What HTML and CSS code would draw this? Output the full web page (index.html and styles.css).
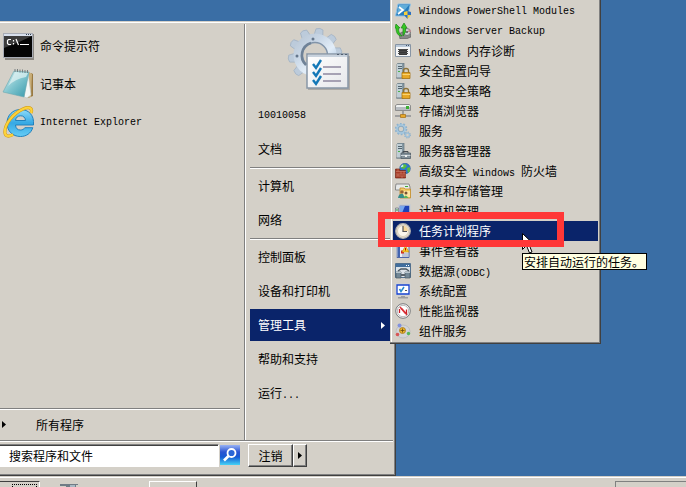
FILE: index.html
```html
<!DOCTYPE html>
<html lang="zh-CN">
<head>
  <meta charset="UTF-8">
  <meta name="viewport" content="width=device-width, initial-scale=1">
  <title>管理工具</title>
  <link rel="stylesheet" href="styles.css">
</head>
<body>
  <main class="desktop">
    <div class="start-menu">
      <div class="start-main">
        <div class="left-col">
          <ul class="pinned">
            <li>
              <svg class="app-icon" viewBox="0 0 32 32">
                <path d="M3 4h29v26H3z" fill="#8c8983"/>
                <path d="M1 3h30v25H1z" fill="#a8acb5"/>
                <path d="M2 4h28v2H2z" fill="#d7dfec"/>
                <path d="M24 4h1v1h-1zM26 4h1v1h-1zM28 4h1v1h-1z" fill="#345"/>
                <path d="M2 6h28v21H2z" fill="#050505"/>
                <path d="M2 6h28Q16 13 2 18z" fill="#3b3b3b"/>
                <path d="M9 9.500H6.500l-1 1v3l1 1H9M11.500 10v1.500M11.500 13v1.500M14 9l2.500 6M18 14.500h9" fill="none" stroke="#fff" stroke-width="1.200"/>
              </svg>
              <span>命令提示符</span>
            </li>
            <li>
              <svg class="app-icon" viewBox="0 0 32 32">
                <defs>
                  <linearGradient id="note" x1="0" y1="0" x2="1" y2="1">
                    <stop offset="0" stop-color="#dff3f3"/><stop offset=".5" stop-color="#7fc4ce"/><stop offset="1" stop-color="#3598ab"/>
                  </linearGradient>
                </defs>
                <path d="M29 5l2 1v22l-5 2z" fill="#9a7a42"/>
                <path d="M27 4l3 2-1 23-5 1z" fill="#c9ae78"/>
                <path d="M26 4l-4 25 3 1 4-3z" fill="#f4f6f4" stroke="#b9c3c3" stroke-width=".6"/>
                <path d="M12 3l15 1-5 25L1 24z" fill="url(#note)" stroke="#6ba7b0" stroke-width=".6"/>
                <path d="M13 4l13 1-2 4Q13 11 6 18z" fill="#e4f4f4" opacity=".7"/>
                <path d="M13 1v3M15.500 1v3M18 1.500v3M20.500 1.500v3M23 2v3M25.500 2v3" stroke="#777f80"/>
              </svg>
              <span>记事本</span>
            </li>
            <li>
              <svg class="app-icon" viewBox="0 0 32 32">
                <defs>
                  <linearGradient id="ie" x1="0" y1="0" x2="0" y2="1">
                    <stop offset="0" stop-color="#8fdcfa"/><stop offset=".5" stop-color="#36a9e4"/><stop offset="1" stop-color="#64ccf6"/>
                  </linearGradient>
                </defs>
                <path d="M31.500 19H13.500c.3 3.500 2 5 5 5 2 0 3.500-.8 4.300-2.300h8C29 27.500 24 30.500 18.500 30.500 10.500 30.500 5 25 5 17S11 3.500 18.500 3.500C26.500 3.500 32.500 9 31.500 19zM13.500 14.500h10c-.3-3-2-4.700-4.800-4.700-3 0-4.800 1.700-5.200 4.700z" fill="url(#ie)" stroke="#1779b8" stroke-width=".9"/>
                <path d="M29 7C31 2 27 0 21 3 12 7 2 18 3 27c.6 3.500 4 4 8 1.500" fill="none" stroke="#d39a14" stroke-width="3.200"/>
                <path d="M29 7C31 2 27 0 21 3 12 7 2 18 3 27c.6 3.500 4 4 8 1.500" fill="none" stroke="#fcd23a" stroke-width="2.200"/>
              </svg>
              <span class="en">Internet Explorer</span>
            </li>
          </ul>
          <div class="all-programs">
            <svg class="arrow" viewBox="0 0 4 7"><path d="M0 0l4 3.500L0 7z"/></svg>
            <span>所有程序</span>
          </div>
        </div>

        <div class="right-col">
          <svg class="user-pic" viewBox="0 0 62 62">
            <defs>
              <linearGradient id="gear" gradientUnits="userSpaceOnUse" x1="5" y1="5" x2="45" y2="50">
                <stop offset="0" stop-color="#b5c2d0"/><stop offset=".35" stop-color="#c9d7e6"/><stop offset=".6" stop-color="#e2edf8"/><stop offset="1" stop-color="#8fb0d2"/>
              </linearGradient>
              <linearGradient id="sheet" x1="0" y1="0" x2="1" y2="1">
                <stop offset="0" stop-color="#fff"/><stop offset="1" stop-color="#e6e7ea"/>
              </linearGradient>
              <path id="teeth" d="M21.500 8l1-7q4-2 7 0l1 7v38l-1 7q-3 2-7 0l-1-7z"/>
              <mask id="hole"><path d="M-5-5h70v70H-5z" fill="#fff"/><circle cx="26" cy="27" r="12"/></mask>
            </defs>
            <g mask="url(#hole)">
              <g fill="#bccbdb" stroke="#a3b3c4" stroke-width=".8">
                <use href="#teeth" transform="rotate(10 26 27)"/>
                <use href="#teeth" transform="rotate(46 26 27)"/>
                <use href="#teeth" transform="rotate(82 26 27)"/>
                <use href="#teeth" transform="rotate(118 26 27)"/>
                <use href="#teeth" transform="rotate(154 26 27)"/>
              </g>
              <circle cx="26" cy="27" r="21.500" fill="url(#gear)"/>
            </g>
            <circle cx="26" cy="27" r="12.500" fill="none" stroke="#8294a8" stroke-width="1.500"/>
            <path d="M17 37a13 13 0 0 1 5-22" fill="none" stroke="#6f8297" stroke-width="2.500"/>
            <circle cx="24" cy="11" r="1.500" fill="#65778c"/>
            <circle cx="8" cy="28" r="1.500" fill="#65778c"/>
            <path d="M19 28h42v34H19z" fill="#9b9894" opacity=".7"/>
            <path d="M18 26h41v34H18z" fill="url(#sheet)" stroke="#8896a6" stroke-width="1.500"/>
            <path d="M19 27h39v2H19z" fill="#c8d2dd"/>
            <path d="M48 26h2v1h-2zM52 26h2v1h-2zM56 26h2v1h-2z" fill="#526071"/>
            <path d="M34 39h18M34 46h18M34 53h18" stroke="#8f88a0" stroke-width="1.600"/>
            <path d="M24 36l3 4 5-8M24 44l3 4 5-8M24 52l3 4 5-8" fill="none" stroke="#1478b7" stroke-width="2.400"/>
          </svg>
          <ul class="places">
            <li><span class="en">10010058</span></li>
            <li>文档</li>
            <li class="sep"></li>
            <li>计算机</li>
            <li>网络</li>
            <li class="sep"></li>
            <li>控制面板</li>
            <li>设备和打印机</li>
            <li class="has-sub">
              <div class="open">
                <span>管理工具</span>
                <svg class="arrow" viewBox="0 0 4 7"><path d="M0 0l4 3.500L0 7z"/></svg>
              </div>

              <ul class="submenu">
                <li>
                  <svg viewBox="0 0 16 16"><path d="M3 1h12.500l-3 12H.5z" fill="#287dbe" stroke="#8fc2e5"/><path d="M4 2h10L9 8 2 10z" fill="#61add9"/><path d="M4 4l4 3-5 4" fill="none" stroke="#fff" stroke-width="1.700"/><path d="M9 9l3.500-1L16 9v3l-3.500 4L9 12z" fill="#f7cf3b"/><path d="M12.500 8v4H16V9zM9 12h3.500v4z" fill="#2b70c5"/></svg>
                  <span class="en">Windows PowerShell Modules</span>
                </li>
                <li>
                  <svg viewBox="0 0 16 16"><path d="M4 11l3-2h8l1 5-5 2H5z" fill="#888" stroke="#555" stroke-width=".6"/><circle cx="12" cy="9" r="3.500" fill="#ccd1d4" stroke="#777"/><path d="M12 9l3-3 1 3z" fill="#c78b91"/><circle cx="12" cy="9" r="1" fill="#555"/><path d="M1 1l4 4H3.500c0 4 1 6 3.500 8-4 0-6-3-6-8H0zM8 13V5H6l3-5 3 5h-1.500v4z" fill="#35c723" stroke="#1c8718" stroke-width=".7"/></svg>
                  <span class="en">Windows Server Backup</span>
                </li>
                <li>
                  <svg viewBox="0 0 16 16"><path d="M.5 1.500h15v12H.5z" fill="#f5f6f7" stroke="#8795a5"/><path d="M1 2h14v2H1z" fill="#b9c9da"/><path d="M11 2h1v1h-1zM13 2h1v1h-1z" fill="#456"/><path d="M4 6h8v6H4z" fill="#383838"/><path d="M3 6.500h10M3 8.500h10M3 10.500h10" stroke="#484848"/></svg>
                  <span><span class="en">Windows </span>内存诊断</span>
                </li>
                <li>
                  <svg viewBox="0 0 16 16"><use href="#server"/><use href="#lock"/></svg>
                  <span>安全配置向导</span>
                </li>
                <li>
                  <svg viewBox="0 0 16 16"><use href="#server"/><use href="#lock"/></svg>
                  <span>本地安全策略</span>
                </li>
                <li>
                  <svg viewBox="0 0 16 16"><path d="M2 1.500h12l1.500 1v5H.5v-5z" fill="#eef0f0" stroke="#777" stroke-width=".8"/><path d="M1 4h14v3H1z" fill="#b7bcc1"/><path d="M11 3h3v3h-3z" fill="#3cb034"/><path d="M8 8v4M0 13h16" stroke="#8d8f91" stroke-width="1.500"/><path d="M5.500 11.500h5v3h-5z" fill="#e6a82b" stroke="#a66f13" stroke-width=".7"/></svg>
                  <span>存储浏览器</span>
                </li>
                <li>
                  <svg viewBox="0 0 16 16"><circle cx="6" cy="6" r="4" fill="none" stroke="#a7c8df" stroke-width="2.500"/><circle cx="6" cy="6" r="5.500" fill="none" stroke="#8eb3cf" stroke-width="1.600" stroke-dasharray="1.800 1.650"/><circle cx="6" cy="6" r="2.800" fill="none" stroke="#7199b6" stroke-width=".7"/><circle cx="12.500" cy="12" r="2" fill="none" stroke="#9fc0d8" stroke-width="1.600"/><circle cx="12.500" cy="12" r="3" fill="none" stroke="#89adc8" stroke-dasharray="1.200 1.150"/></svg>
                  <span>服务</span>
                </li>
                <li>
                  <svg viewBox="0 0 16 16"><use href="#server"/><path d="M8 10V8.500h5V10" fill="none" stroke="#444b50"/><path d="M6 10h9.500v5.500H6z" fill="#83919a" stroke="#4f5c66" stroke-width=".8"/><path d="M6 12.500h9.500" stroke="#cbd4d9"/><path d="M10 12h2v2h-2z" fill="#eef0f0"/></svg>
                  <span>服务器管理器</span>
                </li>
                <li>
                  <svg viewBox="0 0 16 16"><circle cx="10" cy="5.500" r="5.300" fill="#2b79cc" stroke="#205594" stroke-width=".6"/><path d="M7 2l3-1 2 2-3 3-3-1zM12 5l3-1v4l-2 2z" fill="#58bd3f"/><path d="M8 1.500q-2 1-2.500 3l3-1z" fill="#c7ecff"/><path d="M.5 6h4v1.500h6V15H.5z" fill="#a73c27" stroke="#722718" stroke-width=".7"/><path d="M1 8.500h10M1 11h10M1 13h10M3 6v2.500M6 8.500V11M9 8v3M3 11v2M7 13v2" stroke="#cf8370" stroke-width=".6"/></svg>
                  <span>高级安全<span class="en"> Windows </span>防火墙</span>
                </li>
                <li>
                  <svg viewBox="0 0 16 16"><path d="M1 1h13l1 3v3H.5V4z" fill="#e6e8e8" stroke="#777" stroke-width=".8"/><path d="M10 3h3v1h-3z" fill="#3aad32"/><path d="M5 5h4l1 1h5.500v9H5z" fill="#f3cc68" stroke="#c18c28" stroke-width=".8"/><path d="M6 8h9v6H6z" fill="#ffe6a0"/><circle cx="7" cy="9" r="1.800" fill="#9b6435"/><circle cx="11" cy="10" r="1.500" fill="#765334"/><path d="M3 15q1-5 5-4l2 4z" fill="#378d8b"/><path d="M8.500 15q2-5 5 0z" fill="#5ab55a"/></svg>
                  <span>共享和存储管理</span>
                </li>
                <li>
                  <svg viewBox="0 0 16 16"><path d="M4 2h11v9H4z" fill="#1d42b8" stroke="#c6cbd2" stroke-width="1.500"/><path d="M5 3h5L7 10H5z" fill="#78a6ed"/><path d="M.5 5h3v10h-3z" fill="#d3d7da" stroke="#6c7680" stroke-width=".7"/><path d="M1 7h2" stroke="#38a33a"/><path d="M7 12h6l1 3H6z" fill="#86919e"/></svg>
                  <span>计算机管理</span>
                </li>
                <li class="selected">
                  <svg viewBox="0 0 16 16"><circle cx="8" cy="8" r="7.300" fill="#e9e2d3" stroke="#b1b0ad" stroke-width="1.300"/><circle cx="8" cy="8" r="5.500" fill="#fbf7ec" stroke="#d0c5ac" stroke-width=".8"/><path d="M8 8V3a5 5 0 0 1 5 5z" fill="#f6d697"/><path d="M8 3v5.500h4" fill="none" stroke="#555" stroke-width="1.200"/></svg>
                  <span>任务计划程序</span>
                  <svg class="cursor" viewBox="0 0 12 21"><path d="M.5.5v16l4-4 3 7.500 2.500-1-3-7.500h5z" fill="#fff" stroke="#000"/></svg>
                  <div class="red-box"></div>
                  <div class="tooltip" role="tooltip">安排自动运行的任务。</div>
                </li>
                <li>
                  <svg viewBox="0 0 16 16"><path d="M2 .5h12v14H2z" fill="#edf1f8" stroke="#4f67a6"/><path d="M2 1h3v13H2z" fill="#4364af"/><path d="M1 3h2M1 5h2M1 7h2M1 9h2M1 11h2M1 13h2" stroke="#ddd" stroke-width=".8"/><path d="M7 11h6M7 13h6" stroke="#8d99b5"/><path d="M6 7.500h3v3H6z" fill="#d42020"/><path d="M10.500 3l3.500 6H7z" fill="#f8ce29" stroke="#c28a14" stroke-width=".7"/><path d="M10.500 5v2.500" stroke="#c00"/></svg>
                  <span>事件查看器</span>
                </li>
                <li>
                  <svg viewBox="0 0 16 16"><path d="M.5.500h15v14H.5z" fill="#dce3e9" stroke="#52708e"/><path d="M1 1h14v3H1z" fill="#416e9d"/><path d="M11 2h1v1h-1zM13 2h1v1h-1z" fill="#fff"/><path d="M3 8l3-2h5l3 2" fill="none" stroke="#4b5861" stroke-width="1.500"/><path d="M1 9h5v6H1zM10 9h5v6h-5z" fill="#738896" stroke="#455965" stroke-width=".7"/><path d="M6 11h4v2H6z" fill="#59636b"/><path d="M1 9h5v1H1zM10 9h5v1h-5z" fill="#b9c6ce"/></svg>
                  <span>数据源<span class="en">(ODBC)</span></span>
                </li>
                <li>
                  <svg viewBox="0 0 16 16"><path d="M1 1h14v11H1z" fill="#fff" stroke="#cfd1d2" stroke-width="1.500"/><path d="M2 2h12v9H2z" fill="#fff" stroke="#1743cf" stroke-width="1.300"/><path d="M4.500 6l1.500 2.500L9 4" fill="none" stroke="#2687cc" stroke-width="1.500"/><path d="M10 7.500h2" stroke="#555"/><path d="M6 13h4v1h3v1.500H3V14h3z" fill="#9b9d9f"/></svg>
                  <span>系统配置</span>
                </li>
                <li>
                  <svg viewBox="0 0 16 16"><circle cx="8" cy="8" r="7.300" fill="#f8f8f8" stroke="#77797b"/><circle cx="8" cy="8" r="5.700" fill="#fff" stroke="#aaa" stroke-width=".8"/><path d="M4.500 10V6M6.500 5.500l5 5.500V6.500" fill="none" stroke="#ca1e25" stroke-width="1.300"/><path d="M5 4l6 7" stroke="#dc3339" stroke-width="1.600"/></svg>
                  <span>性能监视器</span>
                </li>
                <li>
                  <svg viewBox="0 0 16 16"><ellipse cx="8" cy="8.500" rx="7" ry="6.500" fill="#d2d4d8" stroke="#b4b6ba" stroke-width=".7"/><circle cx="7.500" cy="7.500" r="3" fill="#edb72e" stroke="#a7771b" stroke-width=".8"/><path d="M7.500 5.500v4M5.500 7.500h4" stroke="#684910" stroke-width=".8"/><circle cx="4.500" cy="2.500" r="2" fill="#8292dd"/><circle cx="2.500" cy="11.500" r="1.800" fill="#d75656"/><circle cx="13.500" cy="10.500" r="1.700" fill="#55b95a"/></svg>
                  <span>组件服务</span>
                </li>
              </ul>
            </li>
            <li>帮助和支持</li>
            <li><span>运行<span class="en">...</span></span></li>
          </ul>
        </div>
      </div>

      <form class="start-footer">
        <input class="search" type="text" value="搜索程序和文件" aria-label="搜索程序和文件">
        <button class="search-btn" type="button" aria-label="搜索">
          <svg viewBox="0 0 20 20"><defs><linearGradient id="sb" x1="0" y1="0" x2="0" y2="1"><stop offset="0" stop-color="#99b2f4"/><stop offset=".35" stop-color="#2b55d2"/><stop offset=".6" stop-color="#155bd3"/><stop offset="1" stop-color="#45d3f6"/></linearGradient></defs><path d="M0 0h20v20H0z" fill="url(#sb)"/><circle cx="11.500" cy="8" r="4" fill="#2a66d6" stroke="#fff" stroke-width="1.800"/><path d="M8.500 11L4 15.500" stroke="#fff" stroke-width="2.600"/></svg>
        </button>
        <div class="logoff">
          <button class="btn" type="button">注销</button>
          <button class="btn more" type="button" aria-label="更多">
            <svg class="arrow" viewBox="0 0 4 7"><path d="M0 0l4 3.500L0 7z"/></svg>
          </button>
        </div>
      </form>
    </div>
  </main>

  <footer class="taskbar">
    <button class="start-btn" type="button" aria-label="开始"><span class="focus"></span></button>
    <svg class="task-icon" viewBox="0 0 20 4"><path d="M0 1h18v1h-2v2H6V3H0z" fill="#707c86"/><path d="M10 2h5v2h-5z" fill="#a8b9c4"/></svg>
    <button class="task-btn" type="button" aria-label="任务"></button>
    <div class="tray"></div>
  </footer>

  <!-- shared icon parts -->
  <svg class="defs" aria-hidden="true">
    <g id="server">
      <path d="M2 1l2-1h5v14l-1 1H2z" fill="#8598a3" stroke="#65757e" stroke-width=".7"/>
      <path d="M2 1h5v14H2z" fill="#c0ced5"/>
      <path d="M3 3.500h4M3 5.500h4" stroke="#53656f"/>
      <path d="M3 8h2v1H3z" fill="#4bb14b"/>
      <path d="M1 15h8" stroke="#738089"/>
    </g>
    <g id="lock">
      <path d="M8.500 10V7.500q0-2 2.500-2t2.500 2V10" fill="none" stroke="#8e7439" stroke-width="1.300"/>
      <path d="M7 9.500h8v6H7z" fill="#e7a827" stroke="#a77314" stroke-width=".8"/>
      <path d="M7.500 11.500H15" stroke="#f9d272"/>
    </g>
  </svg>
</body>
</html>
```

FILE: styles.css
```css
* { box-sizing: border-box; }
body { margin: 0; height: 100vh; display: flex; flex-direction: column; overflow: hidden; background: #3a6ea5; color: #000; font: 12px/20px "Noto Sans CJK SC", sans-serif; }
ul { list-style: none; margin: 0; padding: 0; }
svg { display: block; flex: none; }
button, input { font: inherit; color: inherit; border-radius: 0; }
.en { padding-top: 2px; font-family: "Liberation Mono", monospace; font-size: 10px; line-height: 12px; white-space: pre; }
.arrow { width: 4px; height: 7px; fill: currentColor; }
.defs { display: none; }

/* start menu */
.desktop { flex: 1; min-height: 0; display: flex; align-items: flex-end; }
.start-menu { width: 396px; padding-top: 3px; background: #d4d0c8; border-right: 1px solid #404040; border-bottom: 1px solid #404040; box-shadow: inset -1px -1px #808080, inset 0 1px #d4d0c8, inset 0 2px #fff; }
.start-main { display: flex; }
.left-col { width: 246px; display: flex; flex-direction: column; justify-content: space-between; border-right: 1px solid #fff; box-shadow: inset -1px 0 #808080; padding-top: 3px; }
.pinned li { display: flex; align-items: center; gap: 6px; height: 38px; padding-left: 2px; }
.app-icon { width: 32px; height: 32px; }
.all-programs { display: flex; align-items: center; gap: 30px; height: 32px; margin-right: 5px; padding-left: 2px; border-top: 1px solid #808080; box-shadow: inset 0 1px #fff; }

.right-col { flex: 1; padding: 4px 5px 30px 4px; }
.user-pic { width: 62px; height: 62px; margin: 0 auto 8px; overflow: visible; }
.places > li { display: flex; align-items: center; height: 34px; padding-left: 8px; }
.places > .sep { height: 2px; margin-top: 1px; border-top: 1px solid #808080; border-bottom: 1px solid #fff; }
.places > .has-sub { position: relative; padding: 0; }
.open { flex: 1; display: flex; align-items: center; justify-content: space-between; height: 32px; padding: 0 5px 0 8px; background: #0a246a; color: #fff; }

/* submenu opens over the desktop */
.submenu { position: absolute; left: 100%; bottom: -2px; z-index: 2; width: 211px; padding: 2px 2px 2px 3px; background: #d4d0c8; border-right: 1px solid #404040; border-bottom: 1px solid #404040; box-shadow: inset -1px -1px #808080, inset 1px 0 #d4d0c8, inset 2px 0 #fff; }
.submenu li { display: flex; align-items: center; gap: 8px; height: 20px; padding-left: 2px; white-space: nowrap; }
.submenu svg { width: 16px; height: 16px; }
.submenu .selected { position: relative; background: #0a246a; color: #fff; }
.submenu .cursor { position: absolute; left: 129px; top: 12px; width: 12px; height: 21px; }
.red-box { position: absolute; left: -15px; top: -9px; width: 186px; height: 35px; border: 7px solid #ff3737; z-index: 1; }
.tooltip { position: absolute; left: 129px; top: 32px; z-index: 2; height: 17px; padding: 0 2px 0 1px; line-height: 15px; background: #ffffe1; color: #000; border: 1px solid #000; }

/* search and log off */
.start-footer { display: flex; padding: 3px 0 8px; margin-right: 2px; border-top: 1px solid #808080; box-shadow: inset 0 1px #fff; }
.search { width: 219px; height: 23px; padding: 0 9px; background: #fff; border: 1px solid; border-color: #808080 #fff #fff #808080; border-left: 0; box-shadow: inset 0 1px #404040; outline: 0; }
.search-btn { width: 20px; height: 20px; margin: 1px 0 0 1px; padding: 0; border: 0; }
.search-btn svg { width: 20px; height: 20px; }
.logoff { display: flex; margin-left: 8px; }
.btn { width: 45px; height: 23px; padding: 0; line-height: 19px; background: #d4d0c8; border: 1px solid; border-color: #fff #404040 #404040 #fff; box-shadow: inset -1px -1px #808080; }
.more { width: 14px; display: flex; align-items: center; justify-content: center; }

/* taskbar */
.taskbar { flex: none; display: flex; align-items: flex-end; height: 11px; overflow: hidden; background: #d4d0c8; box-shadow: inset 0 1px #d4d0c8, inset 0 2px #fff; }
.start-btn { width: 40px; height: 6px; padding: 2px 2px 0 12px; background: #d4d0c8; border: 0; border-top: 1px solid #404040; border-right: 1px solid #fff; }
.focus { display: block; height: 3px; border: 1px dotted #000; border-bottom: 0; }
.task-icon { width: 20px; height: 4px; margin-left: 20px; }
.task-btn { width: 48px; height: 6px; margin-left: 69px; padding: 0; background: #d4d0c8; border: 1px solid; border-color: #fff #404040 #d4d0c8 #fff; border-bottom: 0; }
.tray { width: 71px; height: 6px; margin-left: auto; border-top: 1px solid #808080; border-left: 1px solid #808080; }
```
